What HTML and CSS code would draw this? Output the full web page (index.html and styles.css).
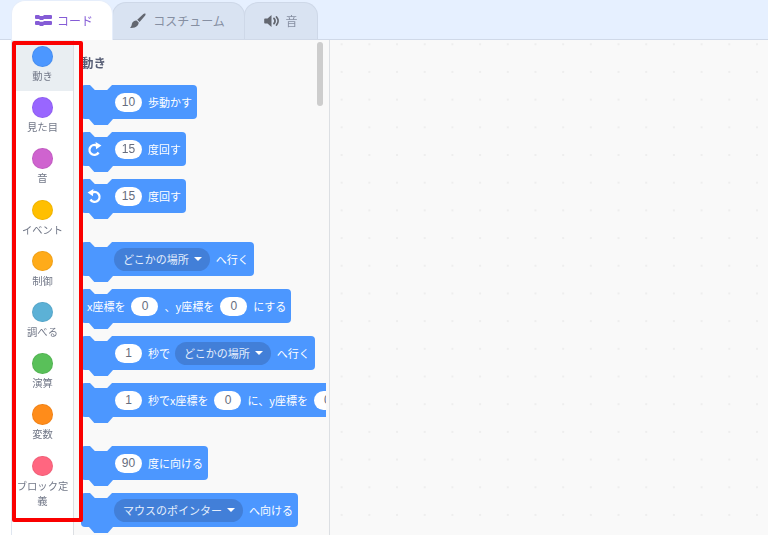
FILE: index.html
```html
<!DOCTYPE html>
<html lang="ja">
<head>
<meta charset="utf-8">
<title>コード</title>
<link rel="stylesheet" href="styles.css">
</head>
<body>
<div class="app">
  <header class="tabs">
    <div class="tab tab-active">
      <svg class="ti ti-code" viewBox="0 0 17 11"><path d="M1 0h3l1 1h3l1-1h7a1 1 0 0 1 1 1v2a1 1 0 0 1-1 1H9L8 5H5L4 4H1a1 1 0 0 1-1-1V1a1 1 0 0 1 1-1z"/><path d="M1 6h3l1 .8h3L9 6h7a1 1 0 0 1 1 1v2a1 1 0 0 1-1 1H9l-1 1H5L4 10H1a1 1 0 0 1-1-1V7a1 1 0 0 1 1-1z"/></svg>
      <span>コード</span>
    </div>
    <div class="tab tab-costume">
      <svg class="ti" viewBox="0 0 16 16"><path d="M15.200.6c.6.400.5 1.200 0 1.800L9.600 8.900 7.200 6.800 13.400 1c.5-.5 1.200-.8 1.800-.4z"/><path d="M6.500 7.600l2.200 2c-.1 2.400-1.600 5.400-7.700 5.400-.6 0-.9-.4-.6-.8 1.300-1 1.200-2 1.500-3.400.4-1.900 2.500-3.300 4.600-3.200z"/></svg>
      <span>コスチューム</span>
    </div>
    <div class="tab tab-sound">
      <svg class="ti" viewBox="0 0 16 14"><path d="M1 4.500h2.500L7.500 1v12L3.500 9.500H1a.8.8 0 0 1-.8-.8V5.300A.8.8 0 0 1 1 4.500z"/><path class="wave" d="M10 4.500a3.500 3.500 0 0 1 0 5"/><path class="wave" d="M12.500 3a6 6 0 0 1 0 8"/></svg>
      <span>音</span>
    </div>
  </header>
  <main class="main">
    <div class="left-gutter"></div>
    <nav class="cats">
      <div class="cat cat-on"><i class="dot c1"></i><span>動き</span></div>
      <div class="cat"><i class="dot c2"></i><span>見た目</span></div>
      <div class="cat"><i class="dot c3"></i><span>音</span></div>
      <div class="cat"><i class="dot c4"></i><span>イベント</span></div>
      <div class="cat"><i class="dot c5"></i><span>制御</span></div>
      <div class="cat"><i class="dot c6"></i><span>調べる</span></div>
      <div class="cat"><i class="dot c7"></i><span>演算</span></div>
      <div class="cat"><i class="dot c8"></i><span>変数</span></div>
      <div class="cat"><i class="dot c9"></i><span>ブロック定義</span></div>
    </nav>
    <section class="palette">
      <div class="list">
        <h2 class="head">動き</h2>
        <div class="block"><b class="num">10</b><span>歩動かす</span></div>
        <div class="block block-icon">
          <svg class="turn" viewBox="0 0 14 14"><path d="M10.800 9.800A4.600 4.600 0 1 1 8.700 3.100"/><polygon points="8,0 13.500,3.300 8.500,6.800"/></svg>
          <b class="num">15</b><span>度回す</span></div>
        <div class="block block-icon">
          <svg class="turn turn-left" viewBox="0 0 14 14"><path d="M10.800 9.800A4.600 4.600 0 1 1 8.700 3.100"/><polygon points="8,0 13.500,3.300 8.500,6.800"/></svg>
          <b class="num">15</b><span>度回す</span></div>
        <div class="block group"><em class="drop">どこかの場所<i class="arr"></i></em><span>へ行く</span></div>
        <div class="block block-text"><span>x座標を</span><b class="num">0</b><span>、y座標を</span><b class="num">0</b><span>にする</span></div>
        <div class="block"><b class="num">1</b><span>秒で</span><em class="drop">どこかの場所<i class="arr"></i></em><span>へ行く</span></div>
        <div class="block"><b class="num">1</b><span>秒でx座標を</span><b class="num">0</b><span>に、y座標を</span><b class="num">0</b></div>
        <div class="block group"><b class="num">90</b><span>度に向ける</span></div>
        <div class="block"><em class="drop">マウスのポインター<i class="arr"></i></em><span>へ向ける</span></div>
      </div>
      <div class="scroll"></div>
    </section>
    <section class="stage"></section>
  </main>
  <div class="highlight"></div>
</div>
</body>
</html>
```
FILE: styles.css
```css
* { box-sizing: border-box; }
html, body { margin: 0; height: 100%; overflow: hidden; background: #fff; }
body { font-family: "Noto Sans CJK JP", "Noto Sans", sans-serif; }
.app { position: relative; display: flex; flex-direction: column; width: 768px; height: 535px; overflow: hidden; filter: blur(0.45px); }

.tabs { display: flex; align-items: flex-end; height: 40px; padding-left: 11px; background: #e6f0ff; border-bottom: 1px solid #d0d9e8; flex: none; }
.tab { display: flex; align-items: center; justify-content: center; gap: 6px; height: 37px; background: #d9e3f2; border: 1px solid #ced8e8; border-bottom: 0; border-radius: 14px 14px 0 0; color: #868fa2; font-size: 12px; line-height: 16px; }
.tab-active { width: 102px; height: 40px; margin-bottom: -1px; padding-left: 4px; gap: 5px; background: #fff; border-color: #e6eefb; color: #855cd6; position: relative; z-index: 1; }
.tab-costume { width: 133px; margin-left: -1px; gap: 7px; padding-right: 2px; }
.tab-sound { width: 74px; margin-left: -1px; gap: 5px; }
.ti { width: 16px; height: 16px; fill: #636770; }
.ti-code { width: 17px; height: 11px; fill: #855cd6; }
.wave { fill: none; stroke: #636770; stroke-width: 1.800; stroke-linecap: round; }

.main { display: flex; flex: 1; min-height: 0; }
.left-gutter { width: 11px; flex: none; background: #fff; }
.cats { width: 63px; flex: none; background: #fff; border-left: 1px solid #dfe6f0; border-right: 1px solid #dcdfe3; }
.cat { display: flex; flex-direction: column; align-items: center; min-height: 51.200px; padding: 6px 0 8.200px; color: #727888; font-size: 10.300px; line-height: 15px; text-align: center; }
.cat-on { background: #e9eef2; }
.dot { display: block; width: 20.500px; height: 20.500px; margin-bottom: 1.500px; border-radius: 50%; border: 1px solid rgba(0,0,0,.06); flex: none; }
.c1 { background: #4c97ff; } .c2 { background: #9966ff; } .c3 { background: #cf63cf; }
.c4 { background: #ffbf00; } .c5 { background: #ffab19; } .c6 { background: #5cb1d6; }
.c7 { background: #59c059; } .c8 { background: #ff8c1a; } .c9 { background: #ff6680; }

.palette { position: relative; width: 256px; flex: none; background: #f9f9f9; border-right: 1px solid #dcdfe3; }
.list { display: flex; flex-direction: column; align-items: flex-start; gap: 13px; width: 252px; height: 100%; padding: 14px 0 0 7px; overflow: hidden; }
.head { margin: 0; font-size: 12.500px; line-height: 18px; font-weight: 700; color: #575e75; }
.scroll { position: absolute; top: 2px; left: 243px; width: 6px; height: 64px; border-radius: 3px; background: #cdcdcd; }

.block { position: relative; display: flex; align-items: center; gap: 6px; flex: none; width: max-content; height: 34px; padding: 0 5px 0 34px; background: #4c97ff; border-radius: 4px; color: #fff; font-size: 11px; line-height: 16px; white-space: nowrap; }
.block::before { content: ""; position: absolute; top: 0; left: 9px; width: 22px; height: 5px; background: #f9f9f9; clip-path: polygon(0 0, 100% 0, 78% 100%, 22% 100%); }
.block::after { content: ""; position: absolute; top: 100%; left: 8px; width: 24px; height: 6px; background: #4c97ff; clip-path: polygon(0 0, 100% 0, 78% 100%, 22% 100%); }
.block-icon { padding-left: 6px; }
.block-text { padding-left: 6px; }
.group { margin-top: 16px; }
.num { display: block; width: 27px; height: 19px; border-radius: 10px; background: #fff; color: #666d7e; font-weight: 400; font-size: 12px; font-family: "Liberation Sans", sans-serif; line-height: 19px; text-align: center; flex: none; }
.turn { width: 15px; height: 15px; margin-right: 7px; flex: none; overflow: visible; }
.turn path { fill: none; stroke: #fff; stroke-width: 2.200; }
.turn polygon { fill: #fff; }
.turn-left { transform: scaleX(-1); }
.drop { display: flex; align-items: center; gap: 5px; height: 23px; margin-left: -1px; padding: 0 8px 0 9px; border-radius: 12px; background: #427fd8; color: #e4eefc; font-style: normal; flex: none; }
.arr { width: 0; height: 0; border-left: 4px solid transparent; border-right: 4px solid transparent; border-top: 4px solid #fff; }

.stage { flex: 1; background-color: #f9f9f9; background-image: radial-gradient(circle, #eeeeee 0.8px, transparent 1.1px); background-size: 27.700px 27.700px; background-position: -2.200px -9.600px; }

.highlight { position: absolute; left: 12px; top: 41px; width: 71px; height: 481px; border: 4.500px solid #fa0000; border-radius: 2px; pointer-events: none; }
```
